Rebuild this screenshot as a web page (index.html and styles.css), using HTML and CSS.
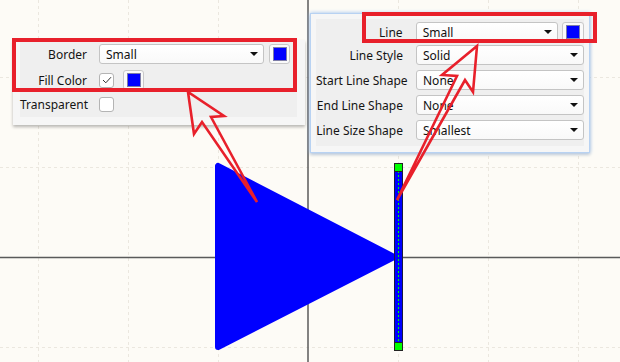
FILE: index.html
```html
<!DOCTYPE html>
<html>
<head>
<meta charset="utf-8">
<link rel="stylesheet" href="styles.css">
</head>
<body>
<div class="canvas">
  <svg class="board" width="620" height="362" viewBox="0 0 620 362">
    <g class="grid">
      <line x1="38.5" y1="0" x2="38.5" y2="362"/>
      <line x1="128.5" y1="0" x2="128.5" y2="362"/>
      <line x1="218.5" y1="0" x2="218.5" y2="362"/>
      <line x1="398.5" y1="0" x2="398.5" y2="362"/>
      <line x1="488.5" y1="0" x2="488.5" y2="362"/>
      <line x1="578.5" y1="0" x2="578.5" y2="362"/>
      <line x1="0" y1="77.5" x2="620" y2="77.5"/>
      <line x1="0" y1="167.5" x2="620" y2="167.5"/>
      <line x1="0" y1="347.5" x2="620" y2="347.5"/>
    </g>
    <g class="axis">
      <line x1="308" y1="0" x2="308" y2="362"/>
      <line x1="0" y1="257.5" x2="620" y2="257.5"/>
    </g>
    <polygon class="tri" points="218,166 218,347 394,257"/>
    <rect class="bar" x="394.5" y="166.5" width="8" height="180"/>
    <line class="guide" x1="398.5" y1="171" x2="398.5" y2="342"/>
    <rect class="handle" x="394.5" y="163.5" width="8" height="8"/>
    <rect class="handle" x="394.5" y="342.5" width="8" height="8"/>
  </svg>

  <div class="panel panel-left">
    <div class="group group-left">
      <div class="row">
        <span class="label">Border</span>
        <div class="select w-border"><span>Small</span><i class="caret"></i></div>
        <div class="swatch"><i></i></div>
      </div>
      <div class="row row-fill">
        <span class="label">Fill Color</span>
        <div class="check">
          <svg width="10" height="8" viewBox="0 0 10 8"><path d="M1 4 L3.8 6.8 L9 1.2" fill="none" stroke="#333" stroke-width="1"/></svg>
        </div>
        <div class="swatch swatch-gap"><i></i></div>
      </div>
      <div class="row">
        <span class="label">Transparent</span>
        <div class="check"></div>
      </div>
    </div>
  </div>

  <div class="panel panel-right">
    <div class="group group-right">
      <div class="row row-first">
        <span class="label">Line</span>
        <div class="select w-line"><span>Small</span><i class="caret"></i></div>
        <div class="swatch swatch-r"><i></i></div>
      </div>
      <div class="row">
        <span class="label">Line Style</span>
        <div class="select w-full"><span>Solid</span><i class="caret"></i></div>
      </div>
      <div class="row">
        <span class="label">Start Line Shape</span>
        <div class="select w-full"><span>None</span><i class="caret"></i></div>
      </div>
      <div class="row">
        <span class="label">End Line Shape</span>
        <div class="select w-full"><span>None</span><i class="caret"></i></div>
      </div>
      <div class="row">
        <span class="label">Line Size Shape</span>
        <div class="select w-full"><span>Smallest</span><i class="caret"></i></div>
      </div>
    </div>
  </div>

  <svg class="overlay" width="620" height="362" viewBox="0 0 620 362">
    <rect class="hl" x="14" y="40" width="281" height="50"/>
    <rect class="hl" x="364" y="14" width="231" height="27"/>
    <polygon class="arrow" points="188,92 194,134 202,122 257,202 211,117 224,116"/>
    <polygon class="arrow" points="477,46 442,75 457,76 397,200 465,80 473,92"/>
  </svg>
</div>
</body>
</html>
```
FILE: styles.css
```css
html, body {
  margin: 0;
  padding: 0;
}
body {
  background: #fdfbf6;
  font-family: "Noto Sans", "Open Sans", sans-serif;
  font-size: 12px;
  color: #141414;
}
.canvas {
  position: relative;
  width: 620px;
  height: 362px;
  overflow: hidden;
}
.board, .overlay {
  position: absolute;
  left: 0;
  top: 0;
}
.overlay {
  pointer-events: none;
}
.grid line {
  stroke: #ebe7df;
  stroke-width: 1;
  stroke-dasharray: 3 3;
}
.axis line {
  stroke: #5a5a5a;
  stroke-width: 1.5;
}
.tri {
  fill: #0000ff;
  stroke: #0000ff;
  stroke-width: 6;
  stroke-linejoin: round;
}
.bar {
  fill: #0000ff;
  stroke: #1a1a40;
  stroke-width: 1;
}
.guide {
  stroke: #00ff00;
  stroke-width: 1;
  stroke-dasharray: 2 2;
}
.handle {
  fill: #00ff00;
  stroke: #222;
  stroke-width: 1;
}
.hl {
  fill: none;
  stroke: #e8202b;
  stroke-width: 4;
}
.arrow {
  fill: none;
  stroke: #e8202b;
  stroke-width: 2.6;
  stroke-linejoin: miter;
}

.panel {
  position: absolute;
  box-sizing: border-box;
  background: #f6f6f6;
}
.panel-left {
  left: 13px;
  top: 40px;
  width: 292px;
  height: 85px;
  padding: 1px 8px 8px 7px;
  box-shadow: 0 2px 3px rgba(0, 0, 0, 0.28);
}
.panel-right {
  left: 310px;
  top: 13px;
  width: 280px;
  height: 140px;
  padding: 5px 5px 6px 5px;
  border: 1px solid #b8d2f2;
  box-shadow: 0 0 4px #9cc2f2, 0 2px 3px rgba(0, 0, 0, 0.15);
}
.group {
  box-sizing: border-box;
  height: 100%;
  background: #efefef;
  display: flex;
  flex-direction: column;
  gap: 5px;
}
.group-left {
  padding-top: 3px;
}
.group-right {
  padding-top: 3px;
}
.row {
  display: flex;
  align-items: center;
  height: 20px;
}
.row-fill {
  margin-top: 1px;
  margin-bottom: -1px;
}
.group-left .label {
  width: 67px;
  margin-right: 12px;
}
.group-right .label {
  width: 87px;
  margin-right: 13px;
}
.row-first {
  margin-bottom: -2px;
}
.label {
  text-align: right;
  white-space: nowrap;
  line-height: 20px;
  padding-top: 1px;
}
.select {
  box-sizing: border-box;
  height: 20px;
  border: 1px solid #c4c4c4;
  border-radius: 3px;
  background: linear-gradient(#ffffff, #f9f9f9);
  display: flex;
  align-items: center;
  justify-content: space-between;
  padding: 0 5px 0 6px;
  color: #111;
}
.w-border { width: 165px; }
.w-line { width: 143px; }
.w-full { width: 168px; }
.caret {
  width: 0;
  height: 0;
  border-left: 4px solid transparent;
  border-right: 4px solid transparent;
  border-top: 4px solid #111;
}
.swatch {
  box-sizing: border-box;
  width: 21px;
  height: 20px;
  margin-left: 5px;
  border: 1px solid #c8c8c8;
  border-radius: 3px;
  background: #fafafa;
  display: flex;
  align-items: center;
  justify-content: center;
}
.swatch i {
  display: block;
  width: 14px;
  height: 14px;
  background: #0000ff;
  border: 1px solid #7d7da8;
  box-sizing: border-box;
}
.swatch-r {
  width: 22px;
  margin-left: 4px;
}
.swatch-gap {
  margin-left: 9px;
}
.check {
  box-sizing: border-box;
  width: 15px;
  height: 15px;
  border: 1px solid #b4b4b4;
  border-radius: 3px;
  background: #ffffff;
  display: flex;
  align-items: center;
  justify-content: center;
}
```
